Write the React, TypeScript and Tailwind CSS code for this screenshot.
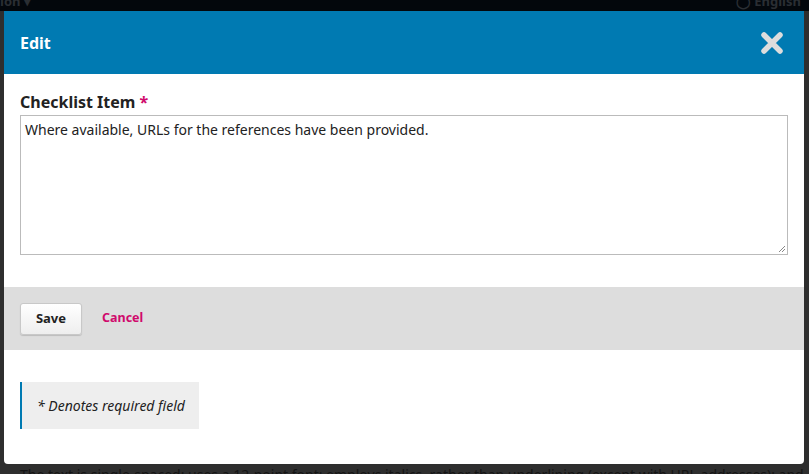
import React from 'react'

const font = { fontFamily: '"Noto Sans", "Open Sans", sans-serif' }

const CloseIcon = () => (
    <svg width="24" height="24" viewBox="0 0 24 24" className="block">
        <path d="M4 4 L20 20 M20 4 L4 20" stroke="#dddddd" strokeWidth="5.5" strokeLinecap="round" />
    </svg>
)

const EditChecklistModal = () => {
    return (
        <div className="absolute left-[4px] top-[11px] w-[800px] h-[453px] bg-white rounded-b-[4px] flex flex-col overflow-hidden">
            {/* Header */}
            <div className="h-[63px] shrink-0 bg-[#007ab2] flex items-center justify-between pl-[16px] pr-[20px]">
                <h2 className="text-[16px] font-bold text-white leading-none">Edit</h2>
                <button>
                    <CloseIcon />
                </button>
            </div>
            {/* Form body */}
            <div className="px-[16px] pt-[18px] pb-[32px]">
                <label className="block text-[16px] font-bold text-[#222] leading-[20px] mb-[3px]">
                    Checklist Item <span className="text-[#d00a6c]">*</span>
                </label>
                <div className="relative w-[768px] h-[140px] border border-[#bbbbbb] bg-white px-[4px] py-[4px]">
                    <p className="text-[14px] text-[#222] leading-[20px]">
                        Where available, URLs for the references have been provided.
                    </p>
                    <svg width="8" height="8" viewBox="0 0 8 8" className="absolute right-[1px] bottom-[1px]">
                        <path d="M7 1 L1 7 M7 4 L4 7" stroke="#888" strokeWidth="1" />
                    </svg>
                </div>
            </div>
            {/* Buttons */}
            <div className="h-[63px] bg-[#dddddd] flex items-center px-[16px] gap-[20px]">
                <button className="w-[62px] h-[32px] rounded-[3px] border border-[#c8c8c8] bg-gradient-to-b from-white to-[#eeeeee] shadow-[0_1px_1px_rgba(0,0,0,0.15)] text-[13px] font-bold text-[#222]">
                    Save
                </button>
                <button className="text-[12.5px] font-bold text-[#d00a6c]">Cancel</button>
            </div>
            {/* Required notice */}
            <div className="px-[16px] pt-[32px]">
                <div className="w-[179px] h-[47px] bg-[#eeeeee] border-l-[2px] border-[#007ab2] flex items-center pl-[15px]">
                    <span className="text-[14px] italic text-[#222]">* Denotes required field</span>
                </div>
            </div>
        </div>
    )
}

export default function App() {
    return (
        <div className="relative w-[809px] h-[474px] bg-[#2e2e2e] overflow-hidden" style={font}>
            {/* dimmed page behind the modal */}
            <div className="h-[11px] bg-[#03070c] flex items-start justify-between text-[13px] font-bold text-[#2a2e33] leading-[11px] overflow-hidden">
                <span className="-mt-[4px]">ion ▾</span>
                <span className="pr-[8px] -mt-[4px]">◯ English</span>
            </div>
            <div className="absolute left-[20px] top-[464px] text-[14px] text-[#141414] whitespace-nowrap">
                The text is single-spaced; uses a 12-point font; employs italics, rather than underlining (except with URL addresses); and
            </div>
            <EditChecklistModal />
        </div>
    )
}
